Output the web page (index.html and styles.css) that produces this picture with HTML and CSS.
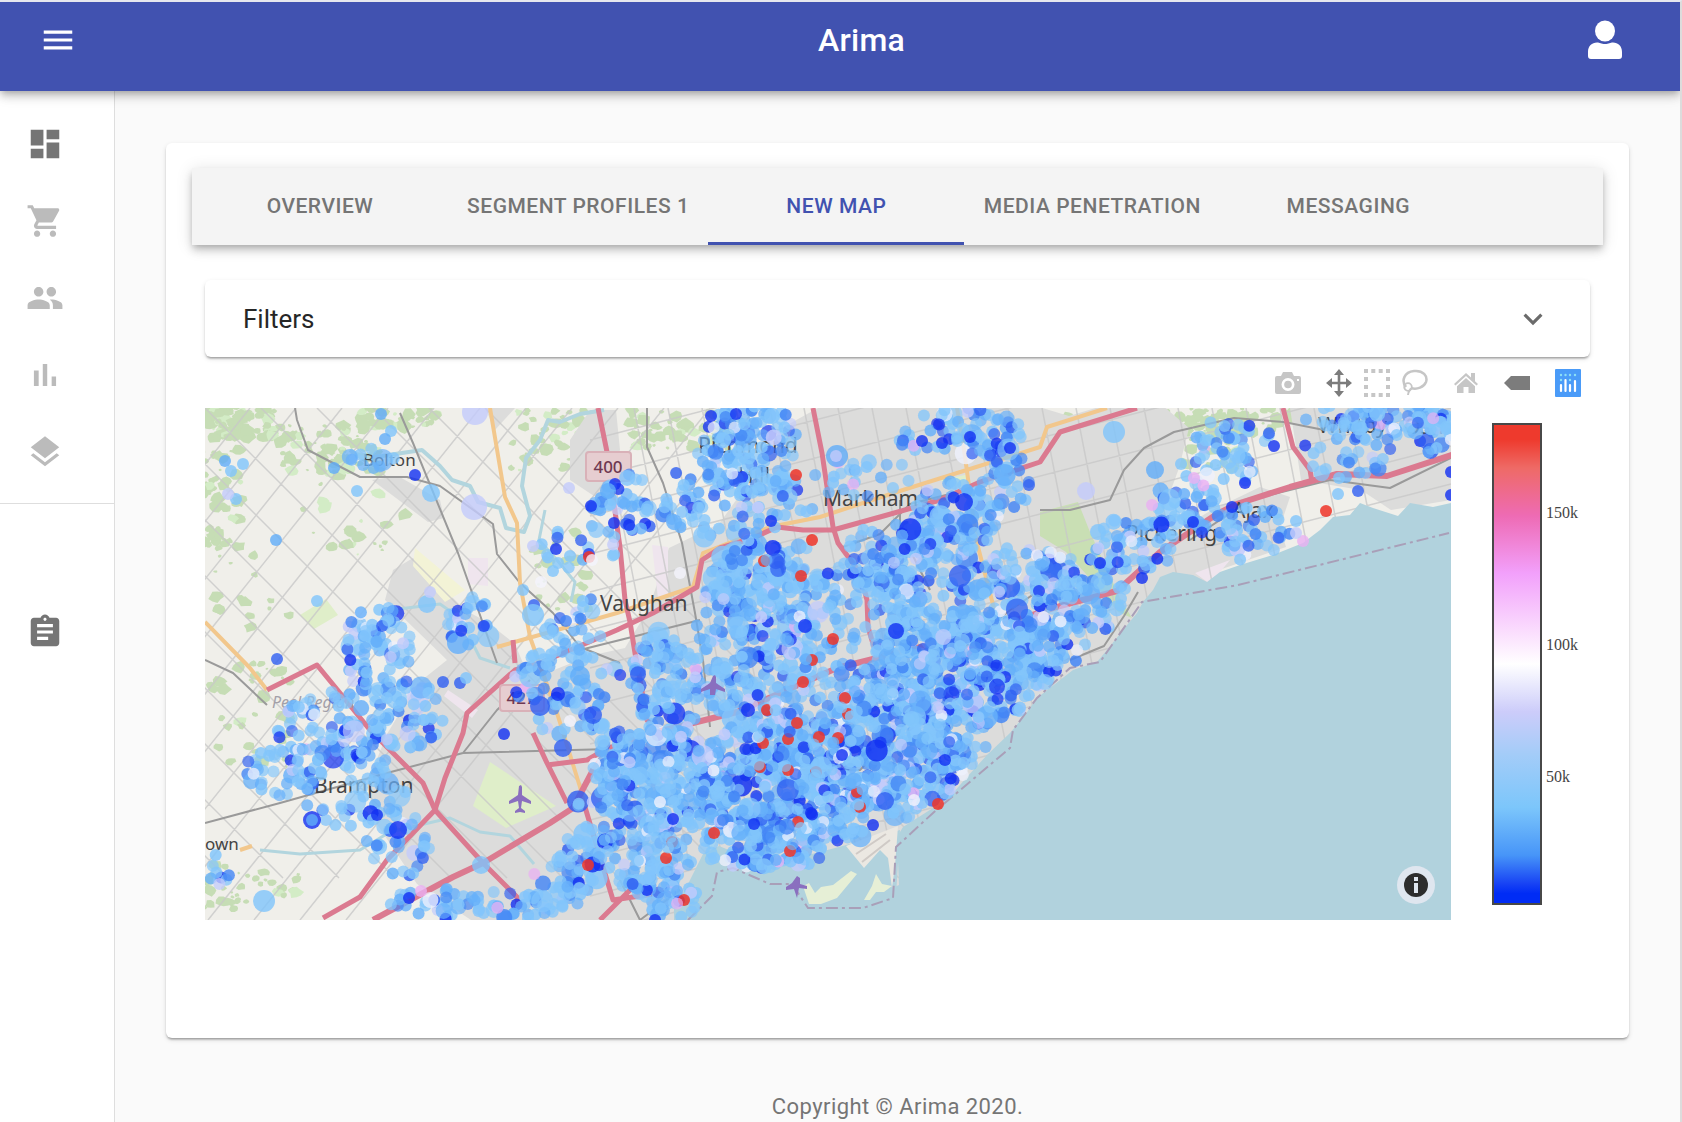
FILE: index.html
```html
<!DOCTYPE html>
<html lang="en">
<head>
<meta charset="utf-8">
<title>Arima</title>
<link rel="stylesheet" href="styles.css">
</head>
<body>
<header class="topbar">
  <button class="icon-button menu-button" type="button" aria-label="Open menu">
    <svg class="icon" viewBox="0 0 24 24"><path d="M3 18h18v-2H3v2zm0-5h18v-2H3v2zm0-7v2h18V6H3z"/></svg>
  </button>
  <h1 class="brand">Arima</h1>
  <button class="icon-button account-button" type="button" aria-label="Account">
    <svg class="account-icon" viewBox="0 0 36 40"><ellipse cx="18" cy="11" rx="10" ry="10.500"/><path d="M1 36v-4c0-6 4-9.500 9-9.500 3 0 4 1.500 8 1.500s5-1.500 8-1.500c5 0 9 3.500 9 9.500v4c0 2-1 3-3 3H4c-2 0-3-1-3-3z"/></svg>
  </button>
</header>
<div class="shell">
  <nav class="sidebar" aria-label="Main">
    <div class="nav-group">
      <a class="nav-link active" href="#dashboard" aria-label="Dashboard"><svg class="icon" viewBox="0 0 24 24"><path d="M3 13h8V3H3v10zm0 8h8v-6H3v6zm10 0h8V11h-8v10zm0-18v6h8V3h-8z"/></svg></a>
      <a class="nav-link" href="#orders" aria-label="Orders"><svg class="icon" viewBox="0 0 24 24"><path d="M7 18c-1.100 0-1.990.9-1.990 2S5.900 22 7 22s2-.9 2-2-.9-2-2-2zM1 2v2h2l3.600 7.590-1.350 2.450c-.16.28-.25.61-.25.960 0 1.100.9 2 2 2h12v-2H7.420c-.14 0-.25-.11-.25-.25l.03-.12.9-1.630h7.450c.75 0 1.410-.41 1.750-1.030l3.580-6.490c.08-.14.12-.31.12-.48 0-.55-.45-1-1-1H5.210l-.94-2H1zm16 16c-1.100 0-1.990.9-1.990 2s.89 2 1.990 2 2-.9 2-2-.9-2-2-2z"/></svg></a>
      <a class="nav-link" href="#people" aria-label="Customers"><svg class="icon" viewBox="0 0 24 24"><path d="M16 11c1.660 0 2.990-1.340 2.990-3S17.660 5 16 5s-3 1.340-3 3 1.340 3 3 3zm-8 0c1.660 0 2.990-1.340 2.990-3S9.660 5 8 5 5 6.340 5 8s1.340 3 3 3zm0 2c-2.330 0-7 1.170-7 3.500V19h14v-2.500c0-2.330-4.670-3.500-7-3.500zm8 0c-.29 0-.62.02-.97.05 1.160.84 1.970 1.970 1.970 3.450V19h6v-2.500c0-2.330-4.670-3.500-7-3.500z"/></svg></a>
      <a class="nav-link" href="#reports" aria-label="Reports"><svg class="icon" viewBox="0 0 24 24"><path d="M5 9.200h3V19H5zM10.600 5h2.800v14h-2.800zm5.600 8H19v6h-2.800z"/></svg></a>
      <a class="nav-link" href="#layers" aria-label="Integrations"><svg class="icon" viewBox="0 0 24 24"><path d="M11.990 18.540l-7.370-5.730L3 14.070l9 7 9-7-1.630-1.270-7.380 5.740zM12 16l7.360-5.730L21 9l-9-7-9 7 1.630 1.270L12 16z"/></svg></a>
    </div>
    <div class="nav-group saved">
      <a class="nav-link active" href="#saved" aria-label="Saved reports"><svg class="icon" viewBox="0 0 24 24"><path d="M19 3h-4.180C14.400 1.840 13.300 1 12 1c-1.300 0-2.400.84-2.820 2H5c-1.100 0-2 .9-2 2v14c0 1.100.9 2 2 2h14c1.100 0 2-.9 2-2V5c0-1.100-.9-2-2-2zm-7 0c.55 0 1 .45 1 1s-.45 1-1 1-1-.45-1-1 .45-1 1-1zm2 14H7v-2h7v2zm3-4H7v-2h10v2zm0-4H7V7h10v2z"/></svg></a>
    </div>
  </nav>
  <main class="content">
    <section class="card">
      <div class="tabs" role="tablist">
        <button class="tab" type="button" role="tab">Overview</button>
        <button class="tab" type="button" role="tab">Segment Profiles 1</button>
        <button class="tab selected" type="button" role="tab" aria-selected="true">New Map</button>
        <button class="tab" type="button" role="tab">Media Penetration</button>
        <button class="tab" type="button" role="tab">Messaging</button>
      </div>
      <div class="panel">
        <button class="filters" type="button" aria-expanded="false">
          <span>Filters</span>
          <svg class="icon" viewBox="0 0 24 24"><path d="M16.590 8.590L12 13.170 7.410 8.590 6 10l6 6 6-6z"/></svg>
        </button>
        <div class="modebar">
          <button class="mode" type="button" aria-label="Download plot"><svg viewBox="0 0 26 28"><path fill-rule="evenodd" d="M2 7h4l2-4h9l2 4h5q2 0 2 2v14q0 2-2 2H2q-2 0-2-2V9q0-2 2-2zM13 9a6.500 6.500 0 1 0 0 13a6.500 6.500 0 1 0 0-13zM22 10v2h2v-2z"/><circle cx="13" cy="15.500" r="3.800"/></svg></button>
          <span class="mode-group">
            <button class="mode on" type="button" aria-label="Pan"><svg viewBox="0 0 26 28"><path d="M13 0l5 6h-3.700v6.700H20V9l6 5-6 5v-3.700h-5.700V22H18l-5 6-5-6h3.700v-6.700H6V19l-6-5 6-5v3.700h5.700V6H8z"/></svg></button>
            <button class="mode" type="button" aria-label="Box select"><svg viewBox="0 0 26 28"><path d="M0 0h4v4H0zM7.300 0h4v4h-4zM14.700 0h4v4h-4zM22 0h4v4h-4zM0 24h4v4H0zM7.300 24h4v4h-4zM14.700 24h4v4h-4zM22 24h4v4h-4zM0 8h4v4H0zM0 16h4v4H0zM22 8h4v4h-4zM22 16h4v4h-4z"/></svg></button>
            <button class="mode" type="button" aria-label="Lasso select"><svg viewBox="0 0 26 28"><g fill="none" stroke="currentColor" stroke-width="2.500"><path d="M4 18C-1 12 2 3 12 2c9-1 14 5 12 11-2 5-9 8-15 6"/><circle cx="6" cy="18" r="3.800" stroke-width="1.800"/><path d="M9 19c-1 3-3 3-3 7" stroke-width="2"/></g></svg></button>
          </span>
          <button class="mode" type="button" aria-label="Reset view"><svg viewBox="0 0 26 28"><path d="M13 4L1 15l1.500 1.500L13 7l10.500 9.500L25 15l-3-2.700V4h-4v4.600zM13 9l-9 8.200V24h6.500v-6h5v6H22v-6.800z"/></svg></button>
          <button class="mode on" type="button" aria-label="Toggle hover labels"><svg viewBox="0 0 26 28"><path d="M0 14l7-7h19v14H7z"/></svg></button>
          <button class="mode brandmark" type="button" aria-label="Produced with Plotly"><svg viewBox="0 0 26 28"><rect width="26" height="28" rx="1" fill="#4a9bf8"/><g fill="#8de0f5"><circle cx="6" cy="6" r="1.200"/><circle cx="10.500" cy="6" r="1.200"/><circle cx="15" cy="6" r="1.200"/><circle cx="20" cy="6" r="1.200"/><circle cx="6" cy="11" r="1.200"/><circle cx="15" cy="11" r="1.200"/></g><path stroke="#fff" stroke-width="2.200" stroke-linecap="round" d="M6 16v6M10.500 11v11M15 16v6M20 12v10"/></svg></button>
        </div>
        <div class="plot">
          <div class="map">
            <svg class="map-canvas" viewBox="205 408 1246 512" preserveAspectRatio="xMidYMid slice" role="img" aria-label="Map of the Toronto area">
              <rect x="205" y="408" width="1246" height="512" fill="#f0efea"/>
              <g id="parks"></g>
              <g fill="#dcdcdb">
                <path d="M372 480l26-4 42 24 4 18-16 4zM385 600l8-30 20-12 22 22 30 30 22 12 28 22 10 24 24 4 40-16 36-8 24-40 20-60 50-24 40-56 30-44 40-22 30-10 90 0 60 6 60 18 40-12 40-10 40 34-10 40-16 44 60 70 50-4 50-4-36 70-250 240-300 40-260 0-60-40-40-60-10-40 20-50 30-50 30-24z"/>
                <path d="M1130 575l30-34 50-30 50-24 30 10-10 30 6 20-70 24-50 4zM1290 408h161v92l-60 10-30-20-60-10zM590 410l-20 30 0 40 30 20 20-50-4-40zM485 408h30l-20 22z"/>
              </g>
              <g fill="#efe5ee"><path d="M468 558h20v28l-20-2zM652 545l16 2v50l-10 2zM1195 573l35-13-20 24zM448 690l30 20-6 8-28-22z"/></g>
              <g fill="#f3f3d6"><path d="M415 548l50 42-20 12-32-36zM700 830l20 4-8 16z"/></g>
              <g fill="#dfeec9"><path d="M490 762l66 44-50 22-33-22zM300 615l26-16 12 16-24 14zM940 480l30-6-10 14z"/></g>
              <path d="M1040 512l38-10 12 30 30 66 12 20-14-6-32-38-20-22-26-16z" fill="#c9dfb4"/>
              <g id="streets" fill="none" stroke="#c8c8c8" stroke-width="1.500"></g>
              <g fill="none" stroke="#b2d5de" stroke-width="4" stroke-linejoin="round">
                <path d="M350 450l12 8 20-2 40-6 18 16 12 14 18 6 8 16 22 6 6 20 18 4 6-16-8-30 4-28 14-18 8-20 12 2 20-8 24-4"/>
                <path d="M545 510l-6 30 18 20 18 22-4 20M260 850l40 4 60-4 30-18 60-14 30 14 30 4 24 28" stroke-width="3"/>
                <path d="M390 610l50-6 20 14 20 40 30 10" stroke-width="3"/>
              </g>
              <path fill="#b1d2dd" d="M1451 503l-18 4-23-4-12 13-25-8-13-5-10 12-17 2-13 13-17 13-30 12-33 10-20 7-13 10-14-7-20-3-13 5-7 13-10 12-6 11-14 17-16 20-10 12-24 8-36 28-12 17-15 18-23 22-20 22-14 16-20 15-30 19-6 10 2 48-28 12h-54l-16-25-22-4-23-7-37-15-16 8-7 14-10 20-12 16V930H1460V503z"/>
              <path fill="#b1d2dd" d="M728 866l50-4 42-10 30-8 50-14-4 66-30 12-56 1-18-26z"/>
              <g fill="#e6efd6"><path d="M803 886l6 18 12 0 16-6 20-24-6-3-18 14-12 2-6 6-6-10zM864 900l8-14 4-12 6 10 10 2-8 6-8 0-6 8z"/></g>
              <path fill="#ebe8e2" d="M846 846l52-20-3 40-3 22-4-30-8-8-16 18z"/>
              <g fill="none" stroke="#cfcac6" stroke-width="2"><path d="M856 854l30-20M862 862l28-22"/></g>
              <g fill="none" stroke="#a99fb8" stroke-width="2" stroke-dasharray="12 4 3 4">
                <path d="M688 920l24-24 5-24 16-4 37 16h22l16 24h55l30-10 3-51 37-34 77-65 3-18 24-32 33-30 30-6 42-60 96-17 211-52"/>
              </g>
              <g fill="none" stroke="#9a9a9a" stroke-width="2" stroke-linejoin="round">
                <path d="M295 408l2 12 11 30 25 13 27 14h47l33 9 53 38 4 30 23 29 33 30 27 34 40 16"/>
                <path d="M400 413l13 30 45 110 39 110M205 823l75-20 107-30 76-20 147-4M463 753l34-43 33-30M205 660l28 13 34 32"/>
                <path d="M647 408v39l16 36 19 60 13 70 8 47 7 67M580 650l120-30M840 548l40-14 30-30 40-10M900 500l0 30 30 60M1040 510l30 0 40-10 14-30 20-22 30-16 60-14 50 4 40 8"/>
                <path d="M950 660l60-50 30-20M1070 660l34-14 20-30 14-24M1190 540l60-40 80-20 60 8 61-30M700 800l60-30 100 0 60-60M620 880l20 40M640 920l40-30"/>
              </g>
              <g fill="none" stroke="#f2c78c" stroke-width="4" stroke-linejoin="round">
                <path d="M490 408l15 89 12 26 3 60 10 54 27 76 23 74 5 20M205 622l45 46 17 22M497 647l120-34 76-26 10-34 67-26 50-10 83-27 137-43 7-20 60-19M957 408l6 35 14 100 20 77M240 850l12-4"/>
              </g>
              <g fill="none" stroke="#db7a90" stroke-width="5" stroke-linejoin="round">
                <path d="M598 408l9 44 11 81 2 14 5 53 5 22 5 31 5 27 7 40 13 17"/>
                <path d="M323 918l37-21 27-37 48-50 10-32 18-45 4-20 48-43 25-7 77-33 36-17 44-26 5-27 18-12 33-10 24-11 26 3h30l47-13 60-17 40-18 60-20 20-30 77-24"/>
                <path d="M813 408l9 45 11 74 5 16 22 30 7 27 1 27 6 20"/>
                <path d="M373 920l80-43 30-14 67-40 23-15 20-38 17-22 43-15 84-21 100-44 120-30 53-16 50-16 57-15 43-39 57-38 20-10 53-17 47-13 50 2 74-24" stroke-width="6"/>
                <path d="M267 690l50-25 23 28 30 37 53 53 12 27 48 53 34 34 1 10M513 640l2 23M533 733l14 30 20 40M547 765l40-5 23-13M585 807l12 40 16 53 47-7M1283 408l10 39 17 23 2 12M600 920l30-30"/>
              </g>
              <g fill="#8a6fbf">
                <path d="M519 786l2-1 1 2v8l9 6v3l-9-3-1 7 4 3v2l-5-1-5 1v-2l4-3-1-7-9 3v-3l9-6z"/>
              </g>
              <g class="place">
                <text class="place-small" x="363" y="466">Bolton</text>
                <text x="698" y="453">Richmond</text>
                <text x="738" y="483">Hill</text>
                <text x="823" y="506">Markham</text>
                <text x="600" y="611">Vaughan</text>
                <text x="314" y="793">Brampton</text>
                <text x="1126" y="541">Pickering</text>
                <text x="1232" y="518">Ajax</text>
                <text x="1318" y="433">Whitby</text>
                <text x="1404" y="434">Osh</text>
                <text class="place-small" x="205" y="850">own</text>
                <text class="region" x="272" y="708">Peel Region</text>
              </g>
              <g class="shield">
                <rect x="586" y="452" width="45" height="29" rx="3"/><text x="608" y="473">400</text>
                <rect x="500" y="685" width="44" height="26" rx="3"/><text x="521" y="704">427</text>
              </g>
              <g id="dots"></g>
              <g fill="#8a6fbf">
                <path d="M713 676l2-1 1 2v6l9 6v3l-9-3-1 6-5 0 0-6-9 3v-3l9-6zM797 876l3 2 0 6 7 2v3l-8-1-2 10-3-9-8 1v-3l6-4z"/>
              </g>
            </svg>
            <button class="info" type="button" aria-label="Map attribution"><svg viewBox="0 0 38 38"><circle cx="19" cy="19" r="19" fill="#dfe6ef"/><circle cx="19" cy="19" r="12" fill="#2d2d2d"/><path fill="#dfe6ef" d="M17 11h4v4h-4zM17 17h4v10h-4z"/></svg></button>
          </div>
          <div class="legend">
            <div class="scale"></div>
            <div class="ticks"><span>150k</span><span>100k</span><span>50k</span></div>
          </div>
        </div>
      </div>
    </section>
    <footer class="footer">Copyright © Arima 2020.</footer>
  </main>
</div>
<script src="map.js"></script>
</body>
</html>
```
FILE: map.js
```js
const NS = 'http://www.w3.org/2000/svg';
let seed = 20207;
function rnd() {
  seed = (seed * 1664525 + 1013904223) % 4294967296;
  return seed / 4294967296;
}
function add(parent, name, attrs) {
  const el = document.createElementNS(NS, name);
  for (const key in attrs) el.setAttribute(key, attrs[key]);
  parent.appendChild(el);
}

// Woodland patches: [centre x, centre y, half width, half height, count]
const parks = document.getElementById('parks');
[[240, 422, 36, 16, 90], [330, 450, 50, 25, 80], [400, 418, 40, 10, 45], [222, 500, 20, 50, 50],
 [250, 590, 40, 40, 16], [250, 720, 40, 60, 35], [250, 890, 50, 26, 35], [360, 520, 60, 40, 20],
 [560, 440, 50, 30, 60], [680, 430, 50, 20, 60], [880, 430, 40, 20, 50], [1100, 445, 60, 30, 110],
 [1200, 440, 40, 30, 70], [1240, 420, 60, 12, 40], [1070, 480, 30, 20, 30], [560, 570, 30, 40, 25],
 [1020, 500, 20, 20, 20], [830, 700, 40, 40, 20]].forEach(([x, y, w, h, n]) => {
  for (let i = 0; i < n; i++) {
    const px = x + (rnd() * 2 - 1) * w, py = y + (rnd() * 2 - 1) * h;
    const size = 1 + rnd() * 5;
    let d = '';
    for (let k = 0; k < 9; k++) {
      const r = size * (0.75 + rnd() * 0.5), a = k / 9 * Math.PI * 2;
      d += (k ? 'L' : 'M') + (px + Math.cos(a) * r * 1.3).toFixed(1) + ' ' + (py + Math.sin(a) * r).toFixed(1);
    }
    add(parks, 'path', { d: d + 'z', fill: rnd() < 0.85 ? '#c6ddb5' : '#d3ecc6' });
  }
});

// Concession roads: diagonal in the west, near-upright in the east
const streets = document.getElementById('streets');
let roads = '';
for (let i = -9; i < 6; i++) roads += `M${205 + i * 56} 408l470 470`;
for (let i = 0; i < 12; i++) roads += `M${250 + i * 46} 408l-410 512`;
for (let i = 0; i < 23; i++) roads += `M${600 + i * 34} 408l${i > 12 ? '50 256' : '90 460'}`;
for (let i = 0; i < 15; i++) roads += `M590 ${440 + i * 38}l861 -222`;
add(streets, 'path', { d: roads, 'stroke-opacity': 0.8 });

// Shoreline used to keep sample points on land
const lake = [[1460, 503], [1410, 500], [1398, 512], [1360, 500], [1335, 515], [1303, 540], [1240, 562], [1205, 575],
 [1160, 572], [1137, 608], [1100, 657], [1062, 670], [1037, 690], [1003, 735], [967, 770], [950, 792], [900, 822],
 [850, 842], [826, 860], [800, 870], [750, 868], [720, 872], [688, 925], [1460, 925]];
function onWater(x, y) {
  let inside = false;
  for (let i = 0, j = lake.length - 1; i < lake.length; j = i++) {
    const [xi, yi] = lake[i], [xj, yj] = lake[j];
    if ((yi > y) !== (yj > y) && x < (xj - xi) * (y - yi) / (yj - yi) + xi) inside = !inside;
  }
  return inside;
}

const palette = [['#82c5fb', 54], ['#66b0fa', 26], ['#4285f5', 9], ['#2f5ff2', 7], ['#1230f2', 5],
 ['#c3cbfb', 5], ['#eef0fc', 2], ['#eab0f3', 1]];
const total = palette.reduce((sum, p) => sum + p[1], 0);
function pickColour() {
  let t = rnd() * total;
  for (const [c, w] of palette) if ((t -= w) < 0) return c;
  return palette[0][0];
}

// Postal areas: [centre x, centre y, radius x, radius y, count]
const areas = [[378, 650, 36, 44, 80], [325, 725, 52, 38, 65], [405, 715, 38, 38, 60], [355, 780, 60, 50, 75],
 [280, 775, 36, 30, 34], [400, 845, 34, 36, 36], [440, 903, 50, 16, 28], [470, 625, 22, 32, 28], [220, 870, 16, 16, 8],
 [570, 690, 58, 46, 85], [580, 620, 34, 26, 20], [510, 905, 56, 14, 42], [565, 880, 32, 26, 34], [590, 840, 24, 50, 36],
 [620, 765, 28, 34, 60], [665, 690, 36, 60, 120], [665, 780, 70, 52, 260], [640, 855, 52, 42, 110], [672, 900, 28, 18, 30],
 [755, 640, 60, 100, 290], [770, 580, 60, 40, 90], [790, 780, 95, 66, 420], [780, 840, 85, 34, 170], [865, 640, 80, 80, 210],
 [890, 560, 50, 36, 70], [935, 590, 46, 84, 140], [955, 520, 44, 40, 85], [960, 670, 90, 60, 280], [880, 750, 80, 62, 290],
 [920, 790, 50, 34, 70], [1010, 650, 56, 44, 110], [1030, 580, 50, 36, 90], [1085, 600, 44, 34, 60], [950, 730, 40, 44, 70],
 [1050, 640, 36, 32, 50],
 [750, 450, 54, 48, 130], [740, 505, 76, 36, 80], [655, 500, 50, 34, 40], [612, 520, 22, 36, 22], [560, 550, 36, 20, 12],
 [960, 434, 64, 26, 70], [860, 475, 56, 24, 22], [1005, 480, 26, 34, 34],
 [1130, 545, 48, 30, 60], [1190, 505, 34, 30, 44], [1235, 450, 42, 34, 50], [1255, 535, 36, 28, 44],
 [1380, 418, 76, 18, 75], [1350, 455, 50, 24, 30], [1430, 430, 24, 26, 30], [375, 464, 30, 20, 9]];
const points = [];
areas.forEach(([x, y, w, h, n]) => {
  for (let i = 0; i < n; i++) {
    const a = rnd() * Math.PI * 2, r = Math.sqrt(rnd());
    const px = x + Math.cos(a) * r * w, py = y + Math.sin(a) * r * h;
    const big = rnd();
    const size = big > 0.97 ? 11 : big > 0.88 ? 8 : 6;
    const c = pickColour(), o = 0.65 + rnd() * 0.2;
    if (!onWater(px, py)) points.push([px, py, size, c, o, rnd()]);
  }
});
points.sort((a, b) => a[5] - b[5]);

const dots = document.getElementById('dots');
function dot(x, y, r, c, o) {
  add(dots, 'circle', { cx: x.toFixed(1), cy: y.toFixed(1), r, fill: c, 'fill-opacity': o });
}
const split = Math.floor(points.length * 0.9);
points.slice(0, split).forEach(p => dot(...p.slice(0, 5)));
[[1326, 511], [796, 475], [812, 540], [764, 561], [801, 576], [833, 639], [803, 682], [845, 698], [848, 714], [797, 723],
 [763, 743], [760, 767], [788, 739], [819, 737], [788, 770], [816, 772], [838, 738], [938, 804], [714, 833], [672, 842],
 [666, 858], [790, 851], [684, 900], [857, 792], [798, 822], [860, 807], [767, 710], [812, 660], [588, 865], [589, 557]]
  .forEach(([x, y]) => dot(x, y, 6, '#ee3428', 0.85));
points.slice(split).forEach(p => dot(...p.slice(0, 5)));

// Outlying points
const L = '#7fc4fb', M = '#60acf9', B = '#2f5ff2', D = '#1230f2', V = '#c3cbfb', W = '#f4f4fc', P = '#eab0f3';
[[381, 414, 6, M], [391, 431, 6, L], [385, 439, 6, M], [225, 461, 6, M], [243, 464, 6, L], [231, 471, 6, L],
 [236, 499, 6, L], [228, 494, 6, V], [334, 468, 6, M], [357, 491, 6, L], [431, 493, 9, L], [475, 412, 13, V],
 [474, 507, 13, V], [415, 475, 6, D], [276, 540, 6, M], [317, 601, 6, L], [277, 659, 6, B], [569, 488, 6, V],
 [591, 506, 6, D], [615, 484, 6, D], [608, 491, 8, M], [614, 523, 6, D], [556, 549, 6, D], [570, 556, 6, L],
 [533, 546, 6, V], [541, 582, 6, W], [523, 590, 6, L], [592, 560, 6, W],
 [534, 605, 6, B], [553, 571, 6, L], [533, 615, 11, L], [548, 631, 9, L], [427, 604, 9, L], [430, 592, 6, V],
 [264, 901, 11, L], [481, 865, 9, L], [563, 748, 9, B], [504, 734, 6, D], [570, 721, 6, W], [312, 820, 9, D],
 [312, 820, 6, M], [398, 830, 9, D], [460, 683, 6, B], [466, 678, 6, L], [443, 682, 6, B], [409, 898, 6, D],
 [421, 891, 6, P], [680, 573, 6, W], [1114, 432, 11, L], [1155, 470, 9, M], [1181, 464, 6, L], [1086, 491, 9, V],
 [1152, 505, 6, P], [1194, 478, 6, P], [1303, 541, 6, P], [1296, 521, 6, L], [1296, 533, 6, V], [1358, 491, 6, B],
 [1338, 494, 6, L], [1339, 478, 6, L], [1451, 495, 6, D], [1451, 472, 6, D], [1274, 446, 6, D], [1245, 483, 6, D],
 [1232, 507, 6, D], [1193, 522, 6, D], [1142, 578, 6, D], [1098, 532, 8, L], [1100, 563, 6, D], [837, 456, 11, M],
 [836, 456, 6, V], [711, 416, 6, D], [736, 414, 6, D], [922, 441, 6, D], [942, 443, 6, D], [970, 437, 6, D],
 [964, 502, 9, D], [1010, 448, 6, D], [960, 576, 11, B], [896, 631, 8, D], [805, 626, 7, D], [748, 710, 7, D],
 [842, 755, 6, D], [811, 813, 6, D], [754, 824, 6, D], [655, 920, 6, D], [873, 825, 6, D], [945, 760, 6, D],
 [673, 819, 6, D], [885, 801, 9, B], [914, 800, 6, W], [771, 521, 6, D], [660, 802, 6, W], [558, 694, 7, D],
 [540, 706, 10, B], [580, 676, 10, M], [593, 715, 9, B]]
  .forEach(([x, y, r, c]) => dot(x, y, r, c, 0.8));
```
FILE: styles.css
```css
* { box-sizing: border-box; }

body {
  margin: 0;
  min-height: 100vh;
  display: flex;
  flex-direction: column;
  border-top: 2px solid #e6e7ee;
  border-right: 2px solid #dcdcdc;
  background: #fafafa;
  color: #262626;
  font-family: Roboto, "Liberation Sans", sans-serif;
}

button {
  margin: 0;
  padding: 0;
  border: 0;
  background: none;
  color: inherit;
  font: inherit;
  cursor: pointer;
}

svg { display: block; }

.icon {
  width: 38px;
  height: 38px;
  fill: currentColor;
}

.topbar {
  position: relative;
  z-index: 1;
  display: flex;
  align-items: center;
  height: 89px;
  padding: 0 57px 13px 39px;
  background: #4152b0;
  color: #fff;
  box-shadow: 0 3px 6px -2px rgba(0, 0, 0, .2), 0 6px 8px rgba(0, 0, 0, .14), 0 2px 16px rgba(0, 0, 0, .12);
}

.menu-button { margin-right: 63px; }

.account-button { margin-left: 4px; }

.account-icon {
  width: 36px;
  height: 40px;
  fill: #fff;
}

.brand {
  flex: 1;
  margin: 0;
  font-size: 32px;
  font-weight: 500;
  line-height: 48px;
  letter-spacing: .0075em;
  text-align: center;
}

.shell {
  flex: 1;
  display: flex;
}

.sidebar {
  width: 115px;
  border-right: 1px solid #dedede;
  background: #fff;
}

.nav-group { padding: 14px 0 13px; }

.saved {
  padding-top: 89px;
  border-top: 1px solid #dedede;
}

.nav-link {
  display: flex;
  align-items: center;
  height: 77px;
  padding-left: 26px;
  color: #bbb;
}

.nav-link.active { color: #757575; }

.content {
  flex: 1;
  min-width: 0;
  padding: 52px 51px 0;
}

.card {
  padding: 25px 26px 118px;
  border-radius: 6px;
  background: #fff;
  box-shadow: 0 3px 2px -2px rgba(0, 0, 0, .2), 0 2px 2px rgba(0, 0, 0, .14), 0 2px 5px rgba(0, 0, 0, .12);
}

.tabs {
  display: flex;
  height: 77px;
  background: #f4f4f4;
  color: #757575;
  box-shadow: 0 3px 6px -2px rgba(0, 0, 0, .2), 0 6px 8px rgba(0, 0, 0, .14), 0 2px 16px rgba(0, 0, 0, .12);
}

.tab {
  min-width: 256px;
  padding: 1px 19px 0;
  border-bottom: 3px solid transparent;
  font-size: 21px;
  font-weight: 500;
  letter-spacing: .025em;
  text-transform: uppercase;
  white-space: nowrap;
}

.tab.selected {
  border-bottom-color: #4152b0;
  color: #4152b0;
}

.panel { padding: 35px 13px 0; }

.filters {
  display: flex;
  align-items: center;
  justify-content: space-between;
  width: 100%;
  height: 77px;
  padding: 0 38px;
  border-radius: 6px;
  box-shadow: 0 3px 2px -2px rgba(0, 0, 0, .2), 0 2px 2px rgba(0, 0, 0, .14), 0 2px 5px rgba(0, 0, 0, .12);
  font-size: 26px;
}

.filters .icon { color: #6b6b6b; }

.modebar {
  display: flex;
  justify-content: flex-end;
  gap: 13px;
  padding: 12px 3px 11px;
}

.mode-group { display: flex; }

.mode {
  padding: 0 6px;
  color: #c6c6c6;
}

.mode svg {
  width: 26px;
  height: 28px;
  fill: currentColor;
}

.mode.on { color: #7c7c7c; }

.plot {
  display: flex;
  gap: 41px;
}

.map {
  position: relative;
  flex: 1;
  min-width: 0;
}

.map-canvas {
  width: 100%;
  height: 512px;
}

.place {
  fill: #444;
  font-family: "Noto Sans", sans-serif;
  font-size: 21px;
}

.place-small { font-size: 17px; }

.region {
  fill: #a3a0a8;
  font-size: 16px;
  font-style: italic;
}

.shield rect {
  fill: #e6cdd0;
  stroke: #d9b1b8;
  stroke-width: 2;
}

.shield text {
  fill: #6f3850;
  font-family: "Noto Sans", sans-serif;
  font-size: 17px;
  font-weight: 500;
  text-anchor: middle;
}

.info {
  position: absolute;
  right: 16px;
  bottom: 16px;
}

.info svg {
  width: 38px;
  height: 38px;
}

.legend {
  display: flex;
  gap: 4px;
  width: 98px;
  padding: 15px 0;
}

.scale {
  width: 50px;
  border: 2px solid #484848;
  background: linear-gradient(#ee3a2d 0 3%, #ee6a66 9%, #ee6bb4 19%, #f2a0fb 31%, #fff 50%, #ccccfa 60%, #a3ccf8 69%, #7cc6fb 80%, #4795f8 90%, #1742f4 96%, #002cf5 98%);
}

.ticks {
  display: flex;
  flex-direction: column;
  gap: 112px;
  padding-top: 80px;
  color: #444;
  font-family: "Liberation Serif", serif;
  font-size: 16px;
  line-height: 20px;
}

.footer {
  padding: 53px 0 0;
  color: #757575;
  font-size: 22px;
  line-height: 32px;
  letter-spacing: .02em;
  text-align: center;
}
```
